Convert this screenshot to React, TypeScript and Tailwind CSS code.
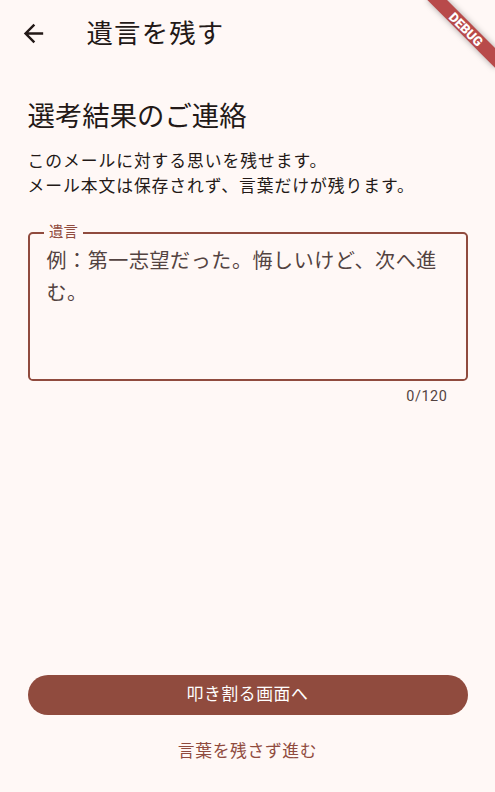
import React from "react";

const FONT = 'Roboto, "Noto Sans CJK JP", "Noto Sans", sans-serif';

export default function App() {
  return (
    <div
      className="relative flex h-screen w-full flex-col overflow-hidden bg-[#fff8f6] text-[#231917]"
      style={{ fontFamily: FONT }}
    >
      {/* App bar */}
      <div className="flex h-[67px] shrink-0 items-center">
        <div className="flex h-[67px] w-[67px] items-center justify-center">
          <svg width="29" height="29" viewBox="0 0 24 24" fill="#231917">
            <path d="M20 11H7.83l5.59-5.59L12 4l-8 8 8 8 1.41-1.41L7.83 13H20v-2z" />
          </svg>
        </div>
        <div className="ml-[19.5px] text-[26.4px] leading-[32px] tracking-[1.2px]">遺言を残す</div>
      </div>

      {/* Body */}
      <div className="flex flex-1 flex-col px-[27.5px]">
        <div className="mt-[32.5px] text-[27.4px] leading-[34px]">選考結果のご連絡</div>
        <div className="mt-[15px] text-[16.8px] leading-[25px] tracking-[0.95px]">
          <div>このメールに対する思いを残せます。</div>
          <div>メール本文は保存されず、言葉だけが残ります。</div>
        </div>

        {/* Text field */}
        <div className="relative mt-[33.5px] h-[149px] rounded-[4.8px] border-[2.4px] border-[#904b3e] px-[17px] pt-[11px]">
          <div className="absolute left-[14px] top-[-9px] bg-[#fff8f6] px-[5.5px] text-[14.4px] leading-[16px] text-[#904b3e]">
            遺言
          </div>
          <div className="text-[20px] leading-[32px] tracking-[0.6px] text-[#534341]">
            例：第一志望だった。悔しいけど、次へ進む。
          </div>
        </div>
        <div className="mt-[6.5px] pr-[20px] text-right text-[14.4px] leading-[18px] tracking-[0.6px] text-[#534341]">
          0/120
        </div>

        <div className="flex-1" />

        {/* Buttons */}
        <div className="flex h-[40px] items-center justify-center rounded-full bg-[#904b3e] text-[16.8px] font-normal tracking-[0.6px] text-white">
          叩き割る画面へ
        </div>
        <div className="mt-[16.5px] mb-[20.5px] flex h-[40px] items-center justify-center text-[16.8px] font-normal tracking-[0.65px] text-[#904b3e]">
          言葉を残さず進む
        </div>
      </div>

      {/* DEBUG banner */}
      <div
        className="absolute right-[-48px] top-[33.6px] flex h-[14.4px] w-[96px] origin-[48px_-33.6px] rotate-45 items-center justify-center bg-[#b84a4a] text-[13px] font-black leading-none text-white shadow-[0_0_6px_rgba(0,0,0,0.35)]"
      >
        DEBUG
      </div>
    </div>
  );
}
